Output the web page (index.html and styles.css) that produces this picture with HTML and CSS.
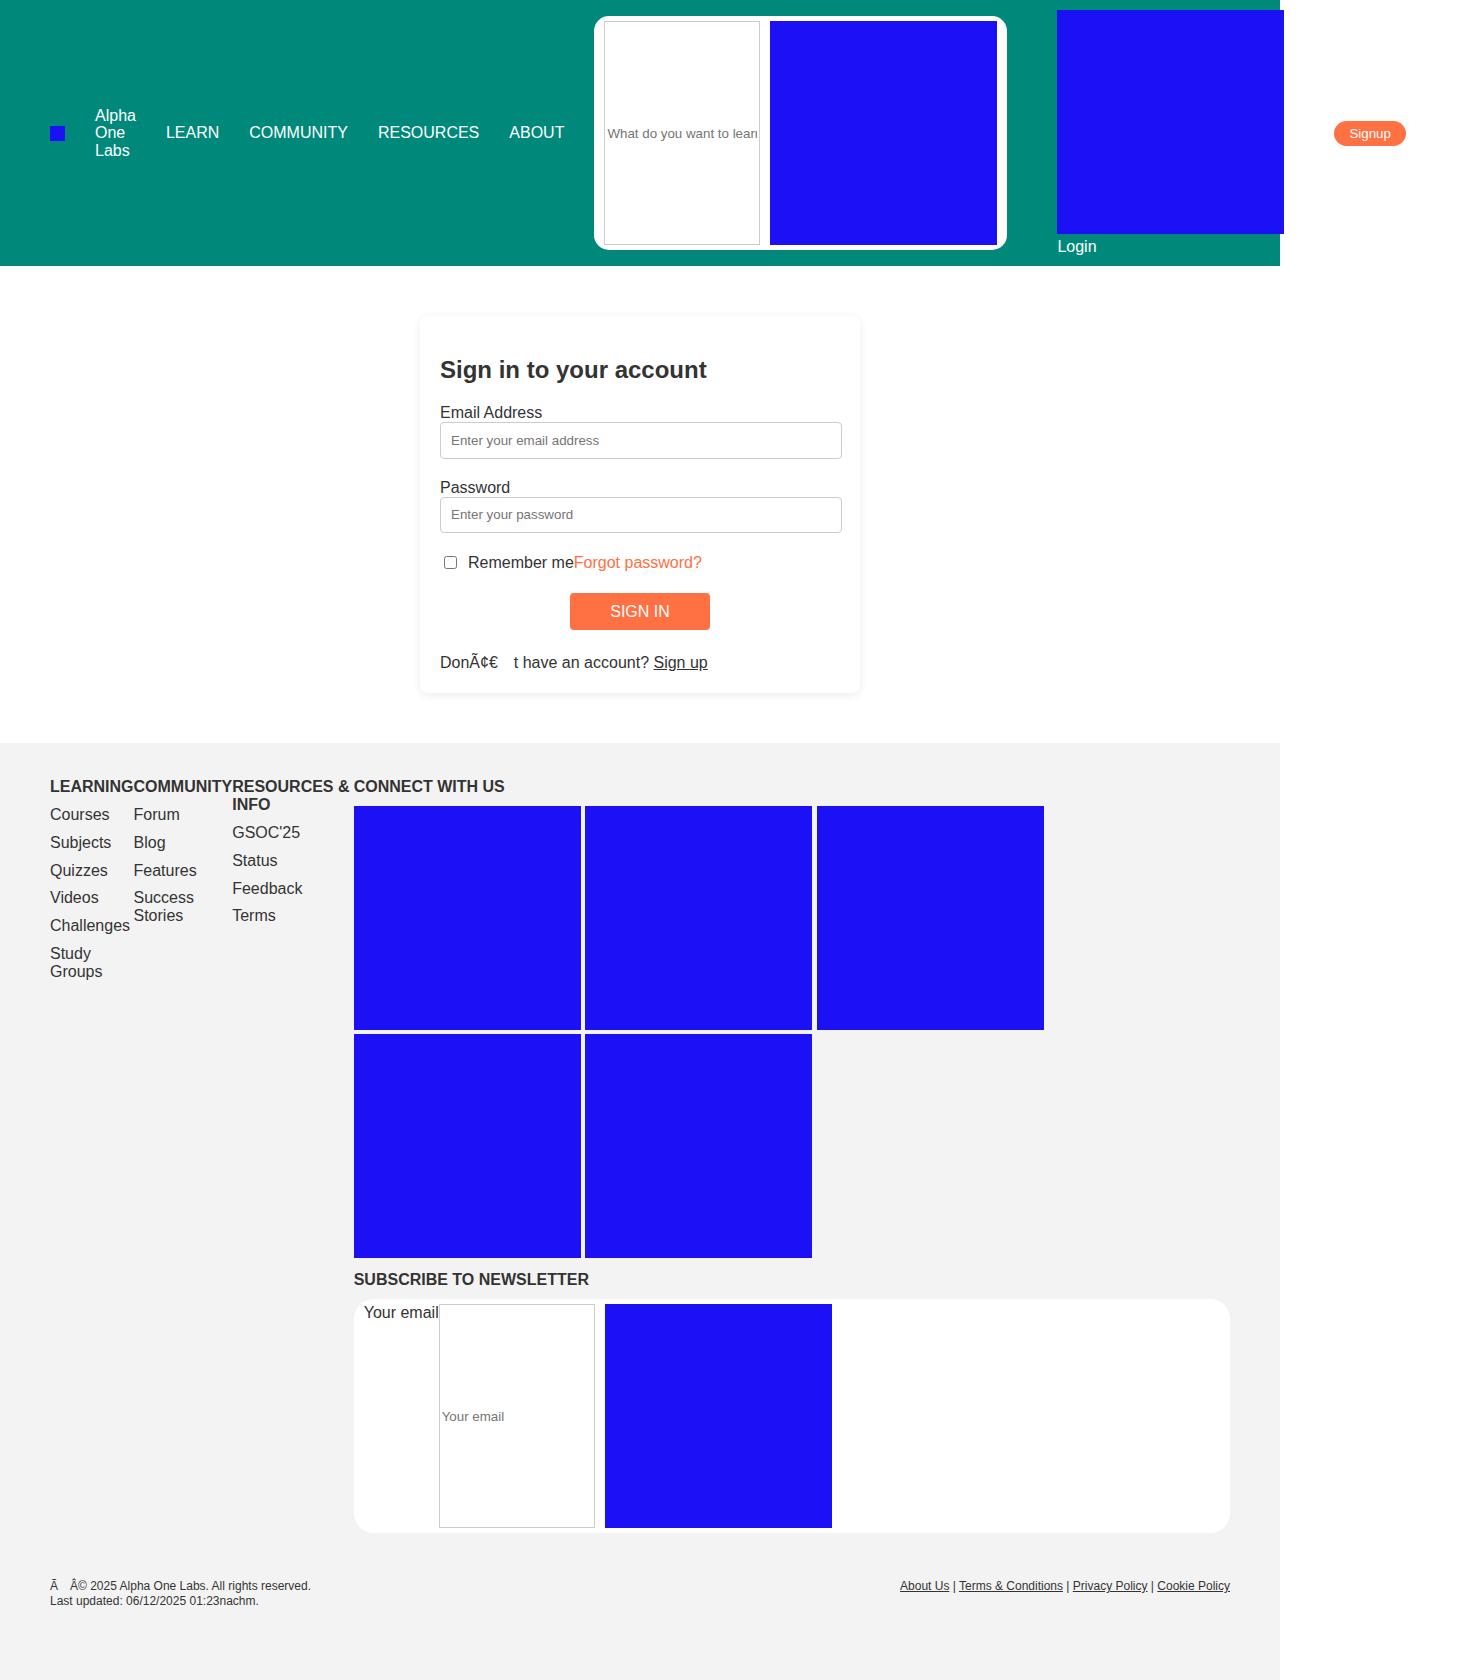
FILE: index.html
```html
<!DOCTYPE html>
<html lang="en">
<head>
<meta charset="utf-8">
<title>Sign in - Alpha One Labs</title>
<link rel="stylesheet" href="styles.css">
</head>
<body>
<div class="page">
  <header class="site-header">
    <a class="brand" href="#">
      <span class="brand-mark"></span>
      <span class="brand-name">Alpha One Labs</span>
    </a>
    <nav class="main-nav">
      <a href="#">LEARN</a>
      <a href="#">COMMUNITY</a>
      <a href="#">RESOURCES</a>
      <a href="#">ABOUT</a>
    </nav>
    <form class="search-form">
      <input class="search-input" type="text" placeholder="What do you want to learn?">
      <button class="icon-block" type="button" aria-label="Search"></button>
    </form>
    <div class="auth">
      <a class="login-link" href="#"><span class="icon-block"></span>Login</a>
      <a class="signup-btn" href="#">Signup</a>
    </div>
  </header>

  <main class="main">
    <div class="card">
      <h2 class="card-title">Sign in to your account</h2>
      <form>
        <div class="form-group">
          <label class="field-label" for="email">Email Address</label>
          <input class="field-input" id="email" type="email" placeholder="Enter your email address">
        </div>
        <div class="form-group">
          <label class="field-label" for="password">Password</label>
          <input class="field-input" id="password" type="password" placeholder="Enter your password">
        </div>
        <div class="remember-row">
          <input class="remember-check" type="checkbox" id="remember">
          <label class="remember-label" for="remember">Remember me</label>
          <a class="forgot-link" href="#">Forgot password?</a>
        </div>
        <div class="submit-wrap">
          <button class="submit-btn" type="button">SIGN IN</button>
        </div>
      </form>
      <div class="signup-text">DonÃ¢€&emsp;t have an account? <a href="#">Sign up</a></div>
    </div>
  </main>

  <footer class="site-footer">
    <div class="footer-top">
      <div class="footer-col col-learning">
        <h3 class="footer-heading">LEARNING</h3>
        <ul class="footer-links">
          <li><a href="#">Courses</a></li>
          <li><a href="#">Subjects</a></li>
          <li><a href="#">Quizzes</a></li>
          <li><a href="#">Videos</a></li>
          <li><a href="#">Challenges</a></li>
          <li><a href="#">Study Groups</a></li>
        </ul>
      </div>
      <div class="footer-col col-community">
        <h3 class="footer-heading">COMMUNITY</h3>
        <ul class="footer-links">
          <li><a href="#">Forum</a></li>
          <li><a href="#">Blog</a></li>
          <li><a href="#">Features</a></li>
          <li><a href="#">Success Stories</a></li>
        </ul>
      </div>
      <div class="footer-col col-resources">
        <h3 class="footer-heading">RESOURCES &amp; INFO</h3>
        <ul class="footer-links">
          <li><a href="#">GSOC'25</a></li>
          <li><a href="#">Status</a></li>
          <li><a href="#">Feedback</a></li>
          <li><a href="#">Terms</a></li>
        </ul>
      </div>
      <div class="footer-col col-connect">
        <h3 class="footer-heading">CONNECT WITH US</h3>
        <div class="social-links">
          <a class="social-box" href="#" aria-label="GitHub"></a>
          <a class="social-box" href="#" aria-label="Slack"></a>
          <a class="social-box" href="#" aria-label="Twitter"></a>
          <a class="social-box" href="#" aria-label="LinkedIn"></a>
          <a class="social-box" href="#" aria-label="YouTube"></a>
        </div>
        <h3 class="footer-heading newsletter-heading">SUBSCRIBE TO NEWSLETTER</h3>
        <form class="newsletter-form">
          <label class="newsletter-label" for="nl-email">Your email</label>
          <input class="newsletter-input" id="nl-email" type="email" placeholder="Your email">
          <button class="icon-block" type="button" aria-label="Subscribe"></button>
        </form>
      </div>
    </div>
    <div class="footer-bottom">
      <div class="copyright">
        <div>Ã&emsp;Â© 2025 Alpha One Labs. All rights reserved.</div>
        <div>Last updated: 06/12/2025 01:23nachm.</div>
      </div>
      <div class="legal-links">
        <a href="#">About Us</a> | <a href="#">Terms &amp; Conditions</a> | <a href="#">Privacy Policy</a> | <a href="#">Cookie Policy</a>
      </div>
    </div>
  </footer>
</div>
</body>
</html>
```

FILE: styles.css
```css
* {
  box-sizing: border-box;
}

body {
  margin: 0;
  background: #ffffff;
  font-family: "Liberation Sans", Arial, sans-serif;
  font-size: 16px;
  color: #333333;
}

.page {
  width: 1280px;
}

/* Header */
.site-header {
  display: flex;
  align-items: center;
  gap: 30px;
  padding: 10px 50px;
  background: #00897b;
  width: 1280px;
}

.site-header > * {
  flex-shrink: 0;
}

.brand {
  display: flex;
  align-items: center;
  gap: 30px;
  color: #ffffff;
  text-decoration: none;
}

.brand-mark {
  display: block;
  width: 15px;
  height: 15px;
  background: #1c10f5;
}

.brand-name {
  width: min-content;
  line-height: 1.1;
}

.main-nav {
  display: flex;
  gap: 30px;
}

.main-nav a {
  color: #ffffff;
  text-decoration: none;
}

.icon-block {
  display: block;
  width: 227px;
  height: 224px;
  padding: 0;
  border: 0;
  background: #1c10f5;
}

.search-form {
  display: flex;
  padding: 5px 10px;
  background: #ffffff;
  border-radius: 15px;
}

.search-input,
.newsletter-input {
  width: 156px;
  padding: 1px 2px;
  border: 1px solid #cccccc;
  font-family: "Liberation Sans", Arial, sans-serif;
  font-size: 13.333px;
  color: #333333;
  background: #ffffff;
}

.search-form .icon-block,
.newsletter-form .icon-block {
  margin-left: 10px;
}

.auth {
  display: flex;
  align-items: center;
  gap: 50px;
  margin-left: 20px;
}

.login-link {
  display: block;
  color: #ffffff;
  text-decoration: none;
}

.login-link .icon-block {
  margin-bottom: 4px;
}

.signup-btn {
  display: inline-block;
  padding: 5px 15px;
  border-radius: 15px;
  background: #ff7043;
  color: #ffffff;
  font-size: 13.333px;
  text-decoration: none;
}

/* Main */
.main {
  padding: 50px 0;
}

.card {
  width: 440px;
  margin: 0 auto;
  padding: 20px 20px 21px;
  background: #ffffff;
  border-radius: 8px;
  box-shadow: 0 2px 10px rgba(0, 0, 0, 0.08);
}

.card-title {
  margin: 20px 0;
  font-size: 24px;
  font-weight: bold;
  color: #333333;
}

.form-group {
  margin-bottom: 20px;
}

.field-label {
  display: block;
  color: #333333;
}

.field-input {
  display: block;
  width: calc(100% + 2px);
  height: 36.5px;
  padding: 0 10px;
  border: 1px solid #cccccc;
  border-radius: 4px;
  font-family: "Liberation Sans", Arial, sans-serif;
  font-size: 13.333px;
}

.remember-row {
  display: flex;
  align-items: center;
  margin-bottom: 21px;
}

.remember-check {
  width: 13px;
  height: 13px;
  margin: 3px 3px 3px 4px;
}

.remember-label {
  margin-left: 8px;
}

.forgot-link {
  color: #ff7043;
  text-decoration: none;
}

.submit-wrap {
  text-align: center;
  margin-bottom: 24px;
}

.submit-btn {
  display: inline-block;
  padding: 9.5px 40px;
  border: 0;
  border-radius: 4px;
  background: #ff7043;
  color: #ffffff;
  font-family: "Liberation Sans", Arial, sans-serif;
  font-size: 16px;
}

.signup-text a {
  color: #333333;
  text-decoration: underline;
}

/* Footer */
.site-footer {
  background: #f3f3f3;
  padding: 35px 50px 80px;
}

.footer-top {
  display: flex;
}

.footer-col {
  flex-shrink: 0;
}

.col-learning {
  width: 83.5px;
}

.col-community {
  width: 98.7px;
}

.col-resources {
  width: 121.5px;
}

.col-connect {
  flex: 1;
}

.footer-heading {
  margin: 0 0 10px;
  font-size: 16px;
  font-weight: bold;
  color: #333333;
}

.footer-links {
  list-style: none;
  margin: 0;
  padding: 0;
}

.footer-links li {
  margin-bottom: 9.8px;
}

.footer-links a {
  color: #333333;
  text-decoration: none;
}

.social-box {
  display: inline-block;
  width: 227px;
  height: 224px;
  background: #1c10f5;
}

.newsletter-heading {
  margin: 9px 0 10px;
}

.newsletter-form {
  display: flex;
  padding: 5px 10px;
  background: #ffffff;
  border-radius: 20px;
}

.newsletter-label {
  color: #333333;
}

.footer-bottom {
  display: flex;
  justify-content: space-between;
  align-items: flex-start;
  margin-top: 46px;
  font-size: 12px;
  color: #333333;
}

.copyright {
  line-height: 1.28;
}

.legal-links a {
  color: #333333;
  text-decoration: underline;
}
```
